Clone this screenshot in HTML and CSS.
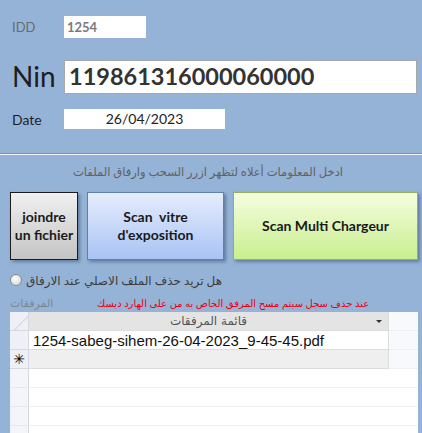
FILE: index.html
```html
<!DOCTYPE html>
<html lang="fr">

<head>
    <meta charset="UTF-8">
    <title>Pièces jointes</title>
    <link rel="stylesheet" href="styles.css">
</head>

<body>
    <div class="form">
        <div class="fields">
            <div class="field field-idd">
                <div class="label label-idd">IDD</div>
                <div class="box box-idd">1254</div>
            </div>
            <div class="field field-nin">
                <div class="label label-nin">Nin</div>
                <div class="box box-nin">119861316000060000</div>
            </div>
            <div class="field field-date">
                <div class="label label-date">Date</div>
                <div class="box box-date">26/04/2023</div>
            </div>
        </div>

        <div class="separator"></div>

        <div class="hint" dir="rtl">ادخل المعلومات أعلاه لتظهر ازرر السحب وارفاق الملفات</div>

        <div class="buttons">
            <div class="btn btn-join">joindre<br>un fichier</div>
            <div class="btn btn-scan">Scan&nbsp; vitre<br>d'exposition</div>
            <div class="btn btn-multi">Scan Multi Chargeur</div>
        </div>

        <div class="option">
            <span class="radio"></span>
            <span class="option-text" dir="rtl">هل تريد حذف الملف الاصلي عند الارفاق</span>
        </div>

        <div class="notes">
            <span class="sheet-label">المرفقات</span>
            <span class="warning" dir="rtl">عند حذف سجل سيتم مسح المرفق الخاص به من على الهارد ديسك</span>
        </div>

        <div class="sheet">
            <div class="row row-head">
                <div class="selector corner"></div>
                <div class="cell head-cell">
                    <span dir="rtl">قائمة المرفقات</span>
                    <span class="arrow"></span>
                </div>
                <div class="rest"></div>
            </div>
            <div class="row">
                <div class="selector"></div>
                <div class="cell data-cell">1254-sabeg-sihem-26-04-2023_9-45-45.pdf</div>
                <div class="rest"></div>
            </div>
            <div class="row">
                <div class="selector star">&#x2733;</div>
                <div class="cell new-cell"></div>
                <div class="rest"></div>
            </div>
            <div class="row empty">
                <div class="selector"></div>
                <div class="cell blank"></div>
            </div>
            <div class="row empty">
                <div class="selector"></div>
                <div class="cell blank"></div>
            </div>
            <div class="row empty">
                <div class="selector"></div>
                <div class="cell blank"></div>
            </div>
            <div class="row empty">
                <div class="selector"></div>
                <div class="cell blank"></div>
            </div>
        </div>
    </div>
</body>

</html>
```

FILE: styles.css
```css
* {
    box-sizing: border-box;
}

html,
body {
    margin: 0;
    height: 100%;
}

body {
    background-color: #95b3d7;
    font-family: 'Lato', 'DejaVu Sans', sans-serif;
    overflow: hidden;
}

.form {
    width: 422px;
    height: 433px;
    overflow: hidden;
}

/* champs du haut */

.fields {
    padding: 16px 0 0 12px;
}

.field {
    display: flex;
    align-items: center;
}

.field-nin {
    margin-top: 21px;
}

.field-date {
    margin-top: 14px;
}

.label {
    width: 52px;
    flex-shrink: 0;
    color: #1f1f1f;
}

.label-idd {
    font-size: 13px;
    color: #6b6b6b;
}

.label-nin {
    font-size: 28px;
    color: #1d1d1d;
    padding-bottom: 2px;
}

.label-date {
    font-size: 14px;
}

.box {
    background: #fff;
}

.box-idd {
    width: 82px;
    height: 22px;
    padding-left: 3px;
    line-height: 22px;
    font-size: 13px;
    font-weight: bold;
    color: #7a7a7a;
}

.box-nin {
    width: 353px;
    height: 34px;
    padding-left: 4px;
    line-height: 31px;
    font-size: 23.5px;
    font-weight: bold;
    color: #333;
    border: 1px solid #a8a8a8;
}

.box-date {
    width: 161px;
    height: 20px;
    text-align: center;
    font-size: 14px;
    color: #222;
    line-height: 20px;
}

.separator {
    margin-top: 24px;
    height: 2px;
    border-top: 1px solid #7d90a6;
    border-bottom: 1px solid #f4f6f8;
}

.hint {
    margin-top: 10px;
    height: 17px;
    text-align: center;
    font-size: 11.5px;
    color: #616161;
    padding-right: 6px;
}

/* boutons */

.buttons {
    display: flex;
    gap: 9px;
    padding: 0 4px 0 10px;
    margin-top: 10px;
    height: 68px;
}

.btn {
    display: flex;
    align-items: center;
    justify-content: center;
    text-align: center;
    font-weight: bold;
    font-size: 14px;
    line-height: 18px;
    color: #1a1a1a;
    box-shadow: 2px 2px 3px rgba(60, 80, 110, 0.55);
}

.btn-join {
    width: 68px;
    background: linear-gradient(#f0f0f0, #c4c4c4);
    border: 1px solid #1b1b1b;
}

.btn-scan {
    width: 137px;
    background: linear-gradient(#e6edfd, #a9c3f4);
    border: 1px solid #5f7fb3;
}

.btn-multi {
    width: 185px;
    background: linear-gradient(#f6fde0, #c8ef8e);
    border: 1px solid #93b356;
}

/* option */

.option {
    display: flex;
    align-items: center;
    gap: 4px;
    padding-left: 10px;
    margin-top: 11px;
    height: 18px;
}

.radio {
    width: 12px;
    height: 12px;
    border-radius: 50%;
    border: 1px solid #8b8b8b;
    background: radial-gradient(circle at 40% 35%, #ffffff, #d2d2d2);
}

.option-text {
    font-size: 12px;
    color: #3b3b3b;
}

.notes {
    display: flex;
    align-items: center;
    padding-left: 10px;
    margin-top: 6px;
    height: 16px;
}

.sheet-label {
    font-size: 11px;
    color: #7d8794;
    width: 87px;
    flex-shrink: 0;
}

.warning {
    font-size: 10px;
    color: #e8000e;
}

/* feuille de données */

.sheet {
    margin: 1px 4px 0 10px;
    background: #fff;
    height: 200px;
}

.row {
    display: flex;
    height: 19px;
}

.selector {
    width: 19px;
    flex-shrink: 0;
    background: #eef0f7;
    border-right: 1px solid #d6d8e0;
    border-bottom: 1px solid #d6d8e0;
}

.corner {
    background: linear-gradient(135deg, #eef0f6 60%, #d9dde6 60%, #d9dde6 66%, #eef0f6 66%);
}

.star {
    font-family: 'DejaVu Sans', sans-serif;
    font-size: 14px;
    line-height: 18px;
    text-align: center;
    color: #000;
}

.cell {
    width: 360px;
    flex-shrink: 0;
    border-bottom: 1px solid #dcdcdc;
    border-right: 1px solid #dcdcdc;
}

.head-cell {
    position: relative;
    background: #e4e4e4;
    text-align: center;
    font-size: 12px;
    color: #555;
    line-height: 18px;
    font-family: 'DejaVu Sans', sans-serif;
}

.arrow {
    position: absolute;
    right: 6px;
    top: 8px;
    border-left: 3px solid transparent;
    border-right: 3px solid transparent;
    border-top: 3px solid #333;
}

.data-cell {
    font-family: 'Liberation Sans', sans-serif;
    font-size: 15px;
    line-height: 19px;
    padding-left: 4px;
    color: #111;
}

.new-cell {
    background: #efefef;
}

.rest {
    flex: 1;
    background: #f8f9fc;
    border-bottom: 1px solid #eef0f3;
}

.empty .selector {
    background: #f4f4fb;
    border-bottom: 1px solid #e6e6ee;
}

.empty .blank {
    flex: 1;
    border-right: none;
    border-bottom: 1px solid #f1f1f1;
}
```
